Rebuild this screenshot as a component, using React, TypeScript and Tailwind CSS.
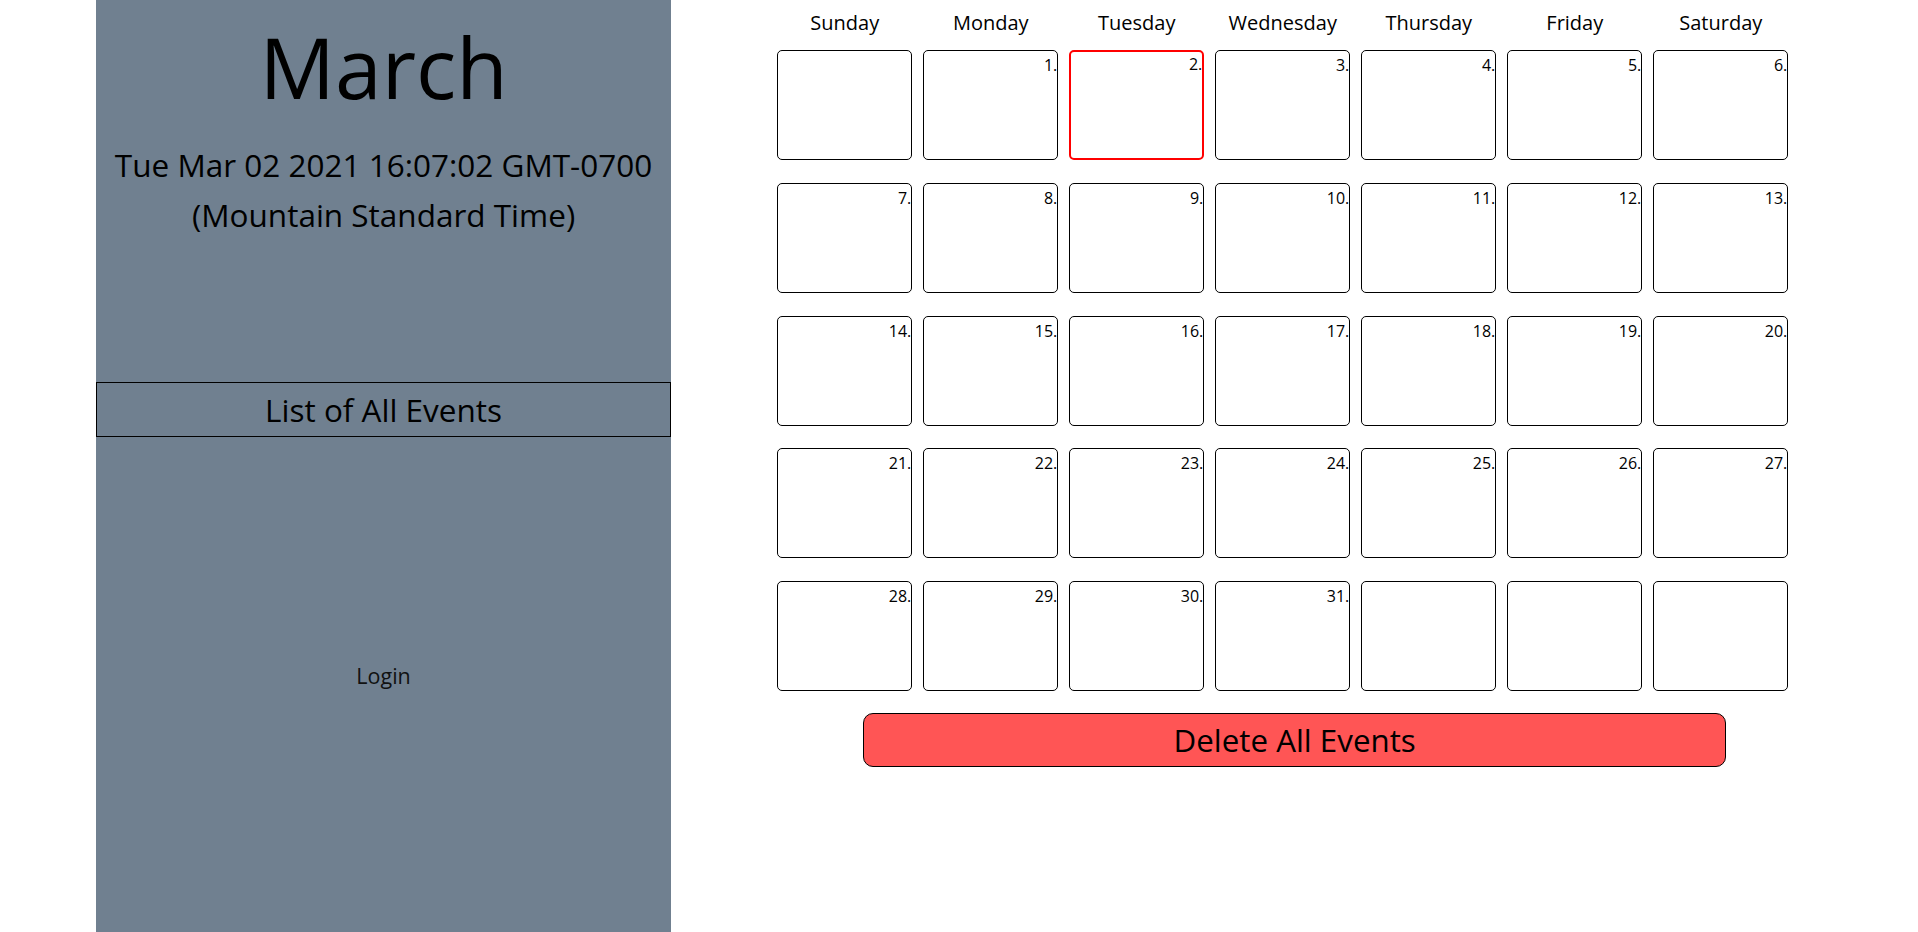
import React from 'react';

const days = ['Sunday', 'Monday', 'Tuesday', 'Wednesday', 'Thursday', 'Friday', 'Saturday'];

// March 2021 starts on a Monday, 35 slots in the grid
const cells: (number | null)[] = Array.from({ length: 35 }, (_, i) => {
  const d = i;
  return d >= 1 && d <= 31 ? d : null;
});

const today = 2;

function DayCell({ day }: { day: number | null }) {
  const isToday = day === today;
  return (
    <div
      className={
        isToday
          ? 'h-[110px] rounded-[5px] border-2 border-[#ff0000] bg-white text-right text-[16px] leading-[24px]'
          : 'h-[110px] rounded-[5px] border border-black bg-white pt-[2px] text-right text-[16px] leading-[24px]'
      }
    >
      {day !== null && <span>{day}.</span>}
    </div>
  );
}

function Sidebar() {
  return (
    <aside className="ml-[5%] flex min-h-screen w-[30%] shrink-0 flex-col bg-[#708090] text-black">
      <h1 className="pt-[25px] text-center text-[84px] leading-[84px] font-normal">March</h1>
      <p className="mt-[31px] text-center text-[31.5px] leading-[50px]">
        <span className="block">Tue Mar 02 2021 16:07:02 GMT-0700</span>
        <span className="block">(Mountain Standard Time)</span>
      </p>
      <div className="mt-[142px] flex h-[55px] items-center justify-center border border-black text-[31.5px]">
        List of All Events
      </div>
      <div className="mt-[225px] text-center text-[21.5px] leading-[28px] text-[#111]">Login</div>
    </aside>
  );
}

function App() {
  return (
    <div className="flex min-h-screen bg-white font-['Open_Sans',sans-serif] text-black">
      <Sidebar />

      <main className="flex flex-1 flex-col">
        <div className="ml-[106px] w-[1011px]">
          <div className="grid h-[50px] grid-cols-[repeat(7,135px)] gap-x-[11px] pt-[9px]">
            {days.map((d) => (
              <div key={d} className="text-center text-[20px] leading-[28px]">
                {d}
              </div>
            ))}
          </div>

          <div className="grid grid-cols-[repeat(7,135px)] gap-x-[11px] gap-y-[22.75px]">
            {cells.map((day, i) => (
              <DayCell key={i} day={day} />
            ))}
          </div>
        </div>

        <button className="mx-auto mt-[22px] h-[54px] w-[45vw] rounded-[10px] border border-black bg-[#ff5555] text-[31.3px] text-black">
          Delete All Events
        </button>
      </main>
    </div>
  );
}

export default App;
